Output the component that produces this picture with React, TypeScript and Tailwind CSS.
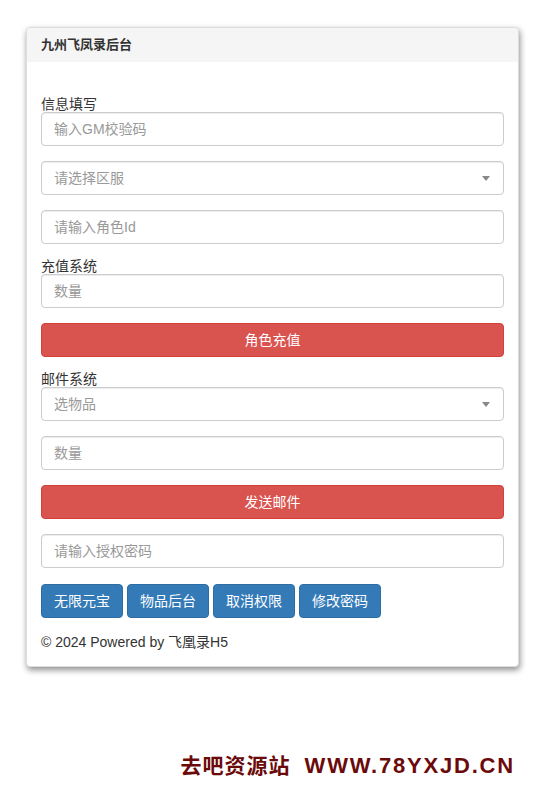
import React from 'react';

const font = 'font-["Liberation_Sans","Noto_Sans_CJK_SC",sans-serif]';
const inputCls =
  'block w-full h-[34px] px-3 text-[14px] text-[#555] bg-white border border-[#ccc] rounded-[4px] shadow-[inset_0_1px_1px_rgba(0,0,0,0.075)] placeholder:text-[#999] outline-none';

function Field({ placeholder, mb = 'mb-[15px]' }: { placeholder: string; mb?: string }) {
  return <input type="text" placeholder={placeholder} className={`${inputCls} ${mb}`} />;
}

function FakeSelect({ text }: { text: string }) {
  return (
    <div className={`${inputCls} mb-[15px] flex items-center justify-between text-[#999]`}>
      <span>{text}</span>
      <span className="mr-[1px] w-0 h-0 border-l-[4px] border-r-[4px] border-t-[5px] border-l-transparent border-r-transparent border-t-[#888]" />
    </div>
  );
}

function Label({ children }: { children: React.ReactNode }) {
  return <div className="h-[15px] leading-[15px] text-[14px] text-[#333]">{children}</div>;
}

function RedButton({ children }: { children: React.ReactNode }) {
  return (
    <button className="block w-full h-[34px] mb-[15px] text-[14px] text-white bg-[#d9534f] border border-[#d43f3a] rounded-[4px]">
      {children}
    </button>
  );
}

export default function App() {
  const actions = ['无限元宝', '物品后台', '取消权限', '修改密码'];
  return (
    <div className={`${font} min-h-[801px] bg-white pt-[27px]`}>
      {/* Panel */}
      <div className="w-[493px] mx-auto bg-white border border-[#ddd] rounded-[4px] shadow-[1px_3px_6px_rgba(0,0,0,0.45)]">
        <div className="h-[34px] px-[14px] flex items-center bg-[#f5f5f5] rounded-t-[4px] text-[13px] font-bold text-[#333]">
          九州飞凤录后台
        </div>
        <div className="px-[14px] pt-[15px] pb-[14px]">
          <div className="h-[20px]" />
          <Label>信息填写</Label>
          <Field placeholder="输入GM校验码" />
          <FakeSelect text="请选择区服" />
          <Field placeholder="请输入角色Id" />

          <Label>充值系统</Label>
          <Field placeholder="数量" />
          <RedButton>角色充值</RedButton>

          <Label>邮件系统</Label>
          <FakeSelect text="选物品" />
          <Field placeholder="数量" />
          <RedButton>发送邮件</RedButton>

          <Field placeholder="请输入授权密码" mb="mb-[16px]" />

          <div className="flex gap-[4px]">
            {actions.map((a) => (
              <button
                key={a}
                className="h-[34px] px-3 text-[14px] text-white bg-[#337ab7] border border-[#2e6da4] rounded-[4px]"
              >
                {a}
              </button>
            ))}
          </div>

          <p className="mt-[14px] h-[20px] leading-[20px] text-[14px] text-[#333]">© 2024 Powered by 飞凰录H5</p>
        </div>
      </div>

      {/* Watermark */}
      <div className="mt-[82px] pr-[30px] flex justify-end items-center gap-[14px] text-[#6b0a0a] font-bold">
        <span className="text-[21px] tracking-[1px]">去吧资源站</span>
        <span className="text-[22px] tracking-[1.8px]">WWW.78YXJD.CN</span>
      </div>
    </div>
  );
}
